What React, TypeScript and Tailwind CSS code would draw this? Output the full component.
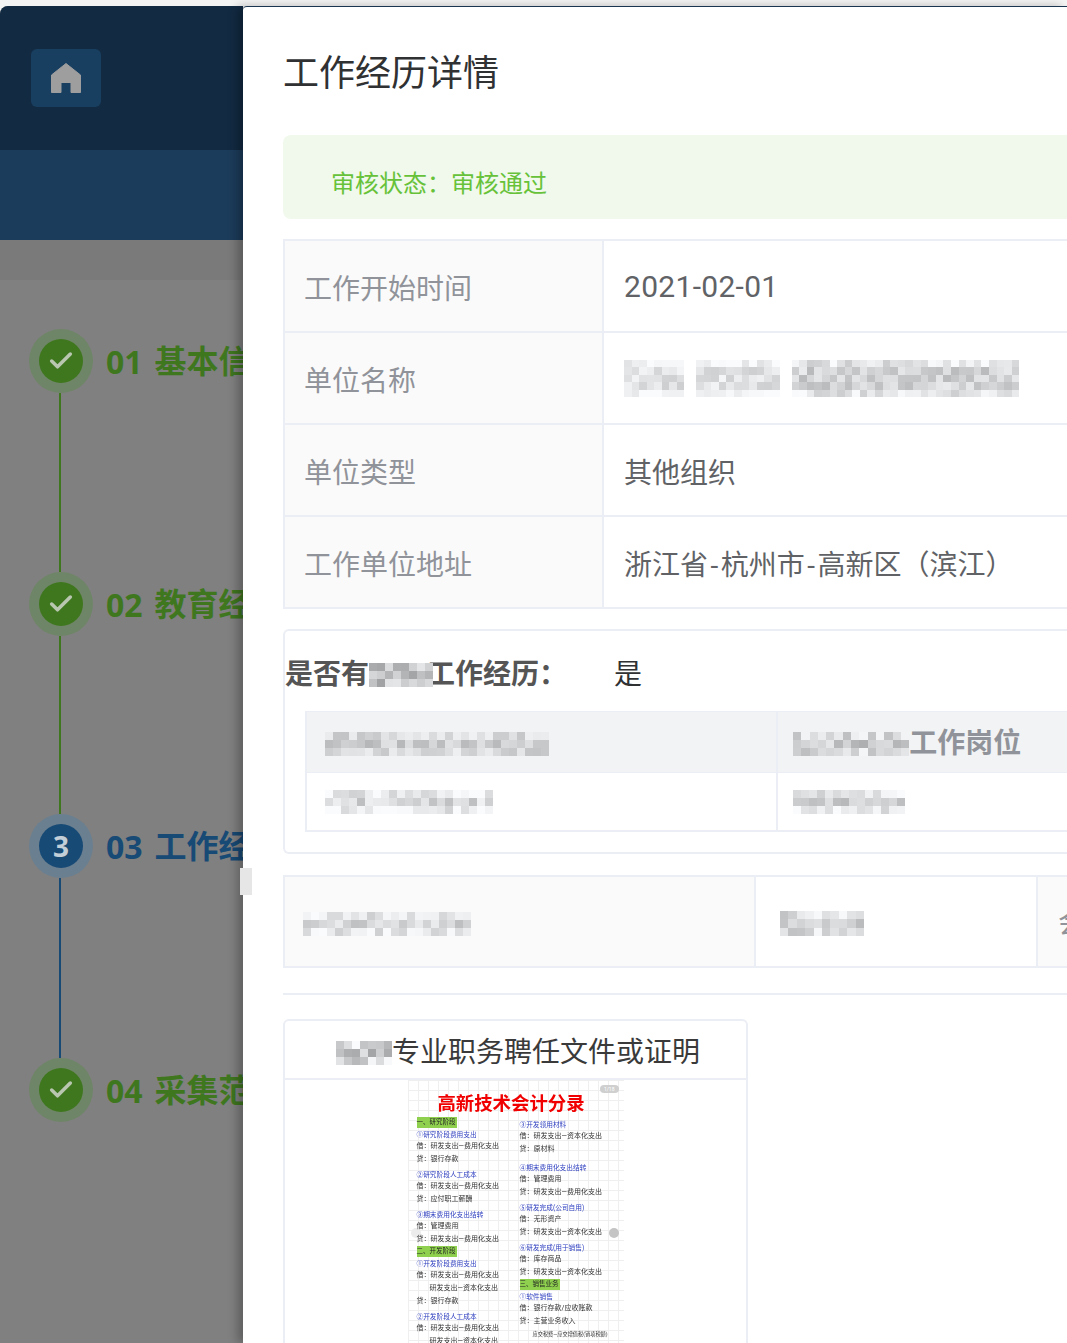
import { Check } from 'lucide-react'

const cjk = "font-['Roboto','Noto_Sans_CJK_SC',sans-serif]"

// cheap repeatable noise so the mosaics don't change between runs
function shade(i: number, seed: number, lo: number, hi: number) {
  const v = Math.sin((i + 1) * 12.9898 + seed * 78.233) * 43758.5453
  return Math.round(lo + (v - Math.floor(v)) * (hi - lo))
}

// pixelated patch that stands in for the blurred text in the screenshot
function Mosaic({ cols, rows = 3, cell = 8, seed = 1, lo = 180, hi = 240 }: { cols: number; rows?: number; cell?: number; seed?: number; lo?: number; hi?: number }) {
  return (
    <div
      className="relative z-10 grid shrink-0 blur-[0.4px]"
      style={{ gridTemplateColumns: `repeat(${cols}, ${cell}px)`, gridAutoRows: `${cell}px` }}
    >
      {Array.from({ length: cols * rows }, (_, i) => {
        const row = Math.floor(i / cols)
        const lift = row === 0 || row === rows - 1 ? 18 : 0
        const s = Math.min(shade(i, seed, lo, hi) + lift, 250)
        return <div key={i} style={{ backgroundColor: `rgb(${s},${s + 1},${s + 2})` }} />
      })}
    </div>
  )
}

function Step({ no, title, done, line, lineBlue }: { no: string; title: string; done: boolean; line?: number; lineBlue?: boolean }) {
  return (
    <div className="flex flex-col">
      <div className="flex h-16 items-center">
        <div className={`ml-[29px] flex h-16 w-16 shrink-0 items-center justify-center rounded-full ${done ? 'bg-[#6f8567]' : 'bg-[#6a7f90]'}`}>
          <div className={`flex h-11 w-11 items-center justify-center rounded-full ${done ? 'bg-[#3f771f]' : 'bg-[#174a75]'}`}>
            {done ? (
              <Check className="h-7 w-7 text-[#b9c6b0]" strokeWidth={3} />
            ) : (
              <span className="font-['Open_Sans'] text-[28px] font-bold leading-none text-[#c3cfd8]">3</span>
            )}
          </div>
        </div>
        <div className={`ml-[13px] flex items-center whitespace-nowrap pt-[2px] text-[32px] font-bold leading-none ${done ? 'text-[#3f771f]' : 'text-[#174a75]'}`}>
          <span className="font-['Open_Sans']">{no}</span>
          <span className="ml-[12px]">{title}</span>
        </div>
      </div>
      {line ? <div className={`ml-[59px] w-[2px] ${lineBlue ? 'bg-[#174a75]' : 'bg-[#3f771f]'}`} style={{ height: line }} /> : null}
    </div>
  )
}

function InfoRow({ label, children }: { label: string; children: React.ReactNode }) {
  return (
    <div className="flex h-[92px] border-b-2 border-[#ebeef5]">
      <div className="flex w-[319px] shrink-0 items-center border-r-2 border-[#ebeef5] bg-[#fafafa] pl-[19px] pt-[7px] text-[28px] text-[#909399]">{label}</div>
      <div className="flex flex-1 items-center pl-[20px] pt-[7px] text-[28px] text-[#606266]">{children}</div>
    </div>
  )
}

function Ledger({ head, lines }: { head: string; lines: string[] }) {
  return (
    <div className="mb-[4px]">
      <div className="whitespace-nowrap text-[6.7px] leading-[10px] text-[#3040c0]">{head}</div>
      {lines.map((l) => (
        <div
          key={l}
          className={`whitespace-nowrap leading-[13px] text-[#333] ${l.includes('(') ? 'text-[5.2px]' : 'text-[7px]'} ${l.startsWith('借') || l.startsWith('贷') ? '' : 'pl-[13px]'}`}
        >
          {l}
        </div>
      ))}
    </div>
  )
}

function Tag({ children, pull }: { children: string; pull?: boolean }) {
  return <div className={`mb-[2px] w-[40px] whitespace-nowrap bg-[#8fd14f] text-[6.5px] leading-[11px] text-[#222] ${pull ? '-mt-[4px]' : ''}`}>{children}</div>
}

export default function App() {
  return (
    <div className={`${cjk} relative h-[1343px] w-[1067px] overflow-hidden bg-[#f4f4f5]`}>
      <div className="mt-[6px] flex h-[1337px]">
        <aside className="w-[243px] shrink-0 overflow-hidden rounded-tl-lg bg-[#808080]">
          <div className="flex h-[144px] items-start bg-[#122a42] pl-[31px] pt-[43px]">
            <div className="flex h-[58px] w-[70px] items-center justify-center rounded-md bg-[#193f60]">
              <svg width="30" height="30" viewBox="0 0 30 30" fill="#9e9e9e">
                <path d="M15 0.5 L29.5 12 V29.5 H20 V19.5 H10 V29.5 H0.5 V12 Z" stroke="#9e9e9e" strokeLinejoin="round" />
              </svg>
            </div>
          </div>
          <div className="h-[90px] bg-[#1c3c5b]" />
          <div className="h-[40px] bg-[#7a7a7a]" />
          <div className="pt-[49px]">
            <Step no="01" title="基本信息" done line={179} />
            <Step no="02" title="教育经历" done line={178} />
            <Step no="03" title="工作经历" done={false} line={180} lineBlue />
            <Step no="04" title="采集范围" done />
          </div>
        </aside>

        <main className="relative flex-1 overflow-hidden rounded-tl-sm border-t border-[#1a3550] bg-white pl-[40px] shadow-[-6px_0_10px_rgba(0,0,0,0.25)]">
          <h1 className="mt-[45px] text-[36px] leading-[44px] text-[#303133]">工作经历详情</h1>

          <div className="mt-[39px] flex h-[84px] items-center rounded-l-lg bg-[#f0f9eb] pl-[48px] pt-[14px] text-[24px] text-[#67c23a]">
            审核状态：审核通过
          </div>

          <div className="mt-[20px] border-l-2 border-t-2 border-[#ebeef5]">
            <InfoRow label="工作开始时间">
              <span className="-mt-[6px] text-[30px] tracking-[0.3px]">2021-02-01</span>
            </InfoRow>
            <InfoRow label="单位名称">
              <div className="-mt-[6px] flex gap-[12px]">
                <Mosaic cols={8} rows={5} cell={7.5} seed={2} lo={205} hi={245} />
                <Mosaic cols={11} rows={5} cell={7.6} seed={3} lo={205} hi={245} />
                <Mosaic cols={30} rows={5} cell={7.6} seed={4} lo={185} hi={235} />
              </div>
            </InfoRow>
            <InfoRow label="单位类型">其他组织</InfoRow>
            <InfoRow label="工作单位地址">
              <span>
                浙江省<span className="px-[2.5px]">-</span>杭州市<span className="px-[2.5px]">-</span>高新区（滨江）
              </span>
            </InfoRow>
          </div>

          <div className="mt-[20px] h-[225px] rounded-l-md border-y-2 border-l-2 border-[#ebeef5]">
            <div className="mt-[24px] flex h-[40px] items-center text-[28px] text-[#303133]">
              <div className="flex items-center font-bold text-[#555]">
                <span>是否有</span>
                <Mosaic cols={8} seed={5} lo={140} hi={215} />
                <span className="-ml-[6px]">工作经历：</span>
              </div>
              <span className="ml-[47px]">是</span>
            </div>
            <div className="ml-[20px] mt-[16px] border-l-2 border-[#ebeef5]">
              <div className="flex h-[62px] border-y border-[#ebeef5] bg-[#f2f3f5]">
                <div className="flex w-[471px] shrink-0 items-center border-r-2 border-[#ebeef5] pl-[18px] pt-[4px]">
                  <Mosaic cols={28} seed={6} lo={176} hi={225} />
                </div>
                <div className="flex flex-1 items-center pl-[15px] pt-[4px] text-[28px] font-bold text-[#909399]">
                  <Mosaic cols={14} cell={8.3} seed={7} lo={170} hi={230} />
                  工作岗位
                </div>
              </div>
              <div className="flex h-[59px] border-b-2 border-[#ebeef5]">
                <div className="flex w-[471px] shrink-0 items-center border-r-2 border-[#ebeef5] pl-[18px]">
                  <Mosaic cols={21} seed={8} lo={190} hi={240} />
                </div>
                <div className="flex flex-1 items-center pl-[15px]">
                  <Mosaic cols={14} seed={9} lo={184} hi={235} />
                </div>
              </div>
            </div>
          </div>

          <div className="mt-[21px] flex h-[93px] border-y-2 border-l-2 border-[#ebeef5]">
            <div className="flex w-[471px] shrink-0 items-center border-r-2 border-[#ebeef5] bg-[#fafafa] pl-[18px] pt-[4px]">
              <Mosaic cols={21} seed={10} lo={186} hi={235} />
            </div>
            <div className="flex w-[282px] shrink-0 items-center border-r-2 border-[#ebeef5] pl-[24px] pt-[4px]">
              <Mosaic cols={10} cell={8.4} seed={11} lo={176} hi={230} />
            </div>
            <div className="flex flex-1 items-center bg-[#fafafa] pl-[20px] pt-[4px] text-[28px] text-[#909399]">会</div>
          </div>

          <div className="mt-[25px] h-[2px] bg-[#ebeef5]" />

          <div className="mt-[24px] w-[465px] rounded-t-md border-2 border-b-0 border-[#ebeef5]">
            <div className="flex h-[59px] items-center border-b-2 border-[#ebeef5] pl-[51px] pt-[6px] text-[28px] text-[#3a3a3a]">
              <Mosaic cols={7} seed={12} lo={160} hi={240} />
              <span>专业职务聘任文件或证明</span>
            </div>
            <div className="flex justify-center">
              <div className="relative h-[263px] w-[216px] bg-[linear-gradient(#efefef_1px,transparent_1px),linear-gradient(90deg,#efefef_1px,transparent_1px)] bg-[size:10px_10px] pl-[9px] pt-[12px]">
                <div className="absolute right-[5px] top-[5px] rounded-full bg-[#cfcfcf] px-[4px] text-[5px] leading-[8px] text-white">1/18</div>
                <div className="absolute left-[3px] top-[148px] h-[10px] w-[10px] rounded-full bg-[#ececec]" />
                <div className="absolute right-[5px] top-[148px] h-[10px] w-[10px] rounded-full bg-[#c4c4c4]" />
                <div className="blur-[0.3px]">
                  <div className="-ml-[9px] pr-[9px] text-center text-[18.4px] font-bold leading-[24px] text-[#f00000]">高新技术会计分录</div>
                  <div className="mt-[1px] grid grid-cols-[103px_1fr]">
                    <div>
                      <Tag>一、研究阶段</Tag>
                      <Ledger head="①研究阶段费用支出" lines={['借：研发支出—费用化支出', '贷：银行存款']} />
                      <Ledger head="②研究阶段人工成本" lines={['借：研发支出—费用化支出', '贷：应付职工薪酬']} />
                      <Ledger head="③期末费用化支出结转" lines={['借：管理费用', '贷：研发支出—费用化支出']} />
                      <Tag pull>二、开发阶段</Tag>
                      <Ledger head="①开发阶段费用支出" lines={['借：研发支出—费用化支出', '研发支出—资本化支出', '贷：银行存款']} />
                      <Ledger head="②开发阶段人工成本" lines={['借：研发支出—费用化支出', '研发支出—资本化支出']} />
                    </div>
                    <div className="pt-[3px]">
                      <Ledger head="③开发领用材料" lines={['借：研发支出—资本化支出', '贷：原材料']} />
                      <div className="h-[3px]" />
                      <Ledger head="④期末费用化支出结转" lines={['借：管理费用', '贷：研发支出—费用化支出']} />
                      <Ledger head="⑤研发完成(公司自用)" lines={['借：无形资产', '贷：研发支出—资本化支出']} />
                      <Ledger head="⑥研发完成(用于销售)" lines={['借：库存商品', '贷：研发支出—资本化支出']} />
                      <Tag pull>三、销售业务</Tag>
                      <Ledger head="①软件销售" lines={['借：银行存款/应收账款', '贷：主营业务收入', '应交税费—应交增值税(销项税额)']} />
                    </div>
                  </div>
                </div>
              </div>
            </div>
          </div>
        </main>
      </div>
      <div className="absolute left-[240px] top-[868px] h-[27px] w-[12px] bg-[#e6e6e6]" />
    </div>
  )
}
